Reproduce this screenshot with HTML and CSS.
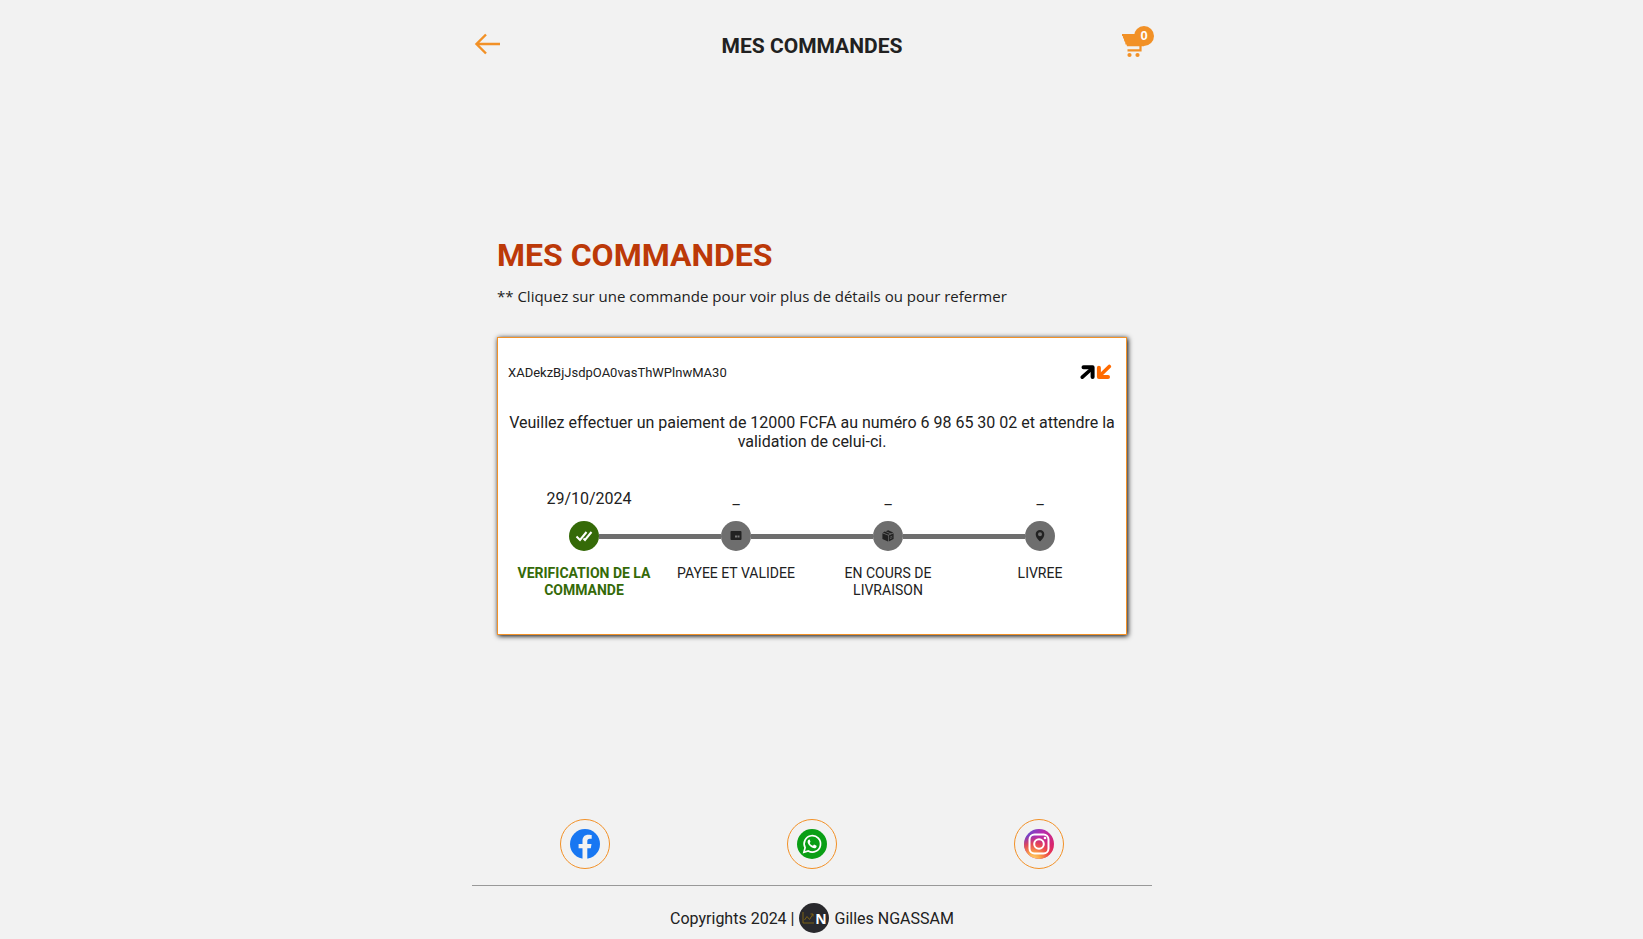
FILE: index.html
```html
<!DOCTYPE html>
<html lang="fr">
<head>
<meta charset="utf-8">
<meta name="viewport" content="width=device-width, initial-scale=1">
<title>Mes commandes</title>
<link rel="stylesheet" href="styles.css">
</head>
<body>
<div class="page">
  <header class="topbar">
    <button class="icon-button" type="button" aria-label="Retour">
      <svg class="back-icon" viewBox="0 0 30 30" fill="none" stroke="currentColor" stroke-width="2.4"><path d="M28 15H4.500M14 5.500 4.500 15l9.500 9.500"/></svg>
    </button>
    <div class="topbar-title">MES COMMANDES</div>
    <button class="icon-button cart-button" type="button" aria-label="Panier">
      <svg class="cart-icon" viewBox="0 0 30 30" fill="currentColor"><path d="M0 5H22V17.300H5L4.500 15.500H3.500L3 12.500H2.300L1.800 9.500H1.200L.8 7H0Z"/><path d="M5.500 21.300H18.500V17" fill="none" stroke="currentColor" stroke-width="2.200"/><circle cx="7.500" cy="26" r="2.100"/><circle cx="15.500" cy="26" r="2.100"/></svg>
      <span class="badge">0</span>
    </button>
  </header>

  <main class="orders">
    <h1 class="orders-title">MES COMMANDES</h1>
    <p class="orders-hint">** Cliquez sur une commande pour voir plus de détails ou pour refermer</p>

    <article class="card">
      <div class="card-head">
        <span class="order-id">XADekzBjJsdpOA0vasThWPlnwMA30</span>
        <svg class="money-icon" viewBox="0 0 32 16" fill="none" stroke-width="3.600"><g stroke="#000"><path d="M2.300 13.200 12 4.500" stroke-linecap="round"/><path d="M3.500 3.200H12.600V13" stroke-width="4" stroke-linejoin="round" stroke-linecap="round"/></g><g stroke="#ff6a00"><path d="M29.300 2.500 20 11.500" stroke-linecap="round"/><path d="M18.900 3.700V13H28" stroke-width="4" stroke-linejoin="round" stroke-linecap="round"/></g></svg>
      </div>
      <p class="message">Veuillez effectuer un paiement de 12000 FCFA au numéro 6 98 65 30 02 et attendre la validation de celui-ci.</p>
      <ol class="steps">
        <li class="step step-done">
          <span class="step-date">29/10/2024</span>
          <span class="step-track"><span class="step-dot"><svg class="check-icon" viewBox="0 0 18 12" fill="none" stroke="#fff" stroke-width="2"><path d="M1.500 6.500 5 10 11.500 2M8.500 8.500 10 10 16.500 2"/></svg></span></span>
          <span class="step-label">VERIFICATION DE LA COMMANDE</span>
        </li>
        <li class="step">
          <span class="step-date">_</span>
          <span class="step-track"><span class="step-dot"><svg class="step-icon" viewBox="0 0 12 12"><rect x=".5" y="1" width="11" height="9" rx="1" fill="#222"/><path d="M5 6.500h2M7.500 6.500h2" stroke="#777" stroke-width="1.800"/></svg></span></span>
          <span class="step-label">PAYEE ET VALIDEE</span>
        </li>
        <li class="step">
          <span class="step-date">_</span>
          <span class="step-track"><span class="step-dot"><svg class="step-icon" viewBox="0 0 12 12" fill="#222"><path d="M.4 3.300 6 5.500v6L.4 9ZM6.700 5.500 11.600 3.300V9L6.700 11.500ZM.8 2.500 2.800 1.600 8.200 3.900 6.300 4.800ZM3.700 1.200 6.200.2l5 2.200-2.100 1Z"/><path d="m7.800 8.800 2.500-1.200M7.800 7.300l2.500-1.200" stroke="#777" stroke-width=".6"/></svg></span></span>
          <span class="step-label">EN COURS DE LIVRAISON</span>
        </li>
        <li class="step">
          <span class="step-date">_</span>
          <span class="step-track"><span class="step-dot"><svg class="step-icon" viewBox="0 0 12 12" fill="#222"><path fill-rule="evenodd" d="M6 0C3.500 0 1.700 1.800 1.700 4.200 1.700 6.500 3 8.500 6 11.500 9 8.500 10.300 6.500 10.300 4.200 10.300 1.800 8.500 0 6 0ZM6 2.300a2 2 0 1 1 0 4 2 2 0 0 1 0-4Z"/></svg></span></span>
          <span class="step-label">LIVREE</span>
        </li>
      </ol>
    </article>
  </main>

  <footer class="footer">
    <nav class="socials" aria-label="Réseaux sociaux">
      <a class="social" href="#facebook" aria-label="Facebook"><svg class="social-icon" viewBox="0 0 30 30"><circle cx="15" cy="15" r="15" fill="#1877f2"/><path fill="#f2f2f2" d="M12.500 30V19.300H8.600V15h3.900v-3.300c0-3.900 2.300-6 5.800-6 1.700 0 3.400.3 3.400.3v3.800h-1.900c-1.900 0-2.500 1.200-2.500 2.300V15h4.200l-.7 4.300h-3.500V30Z"/></svg></a>
      <a class="social" href="#whatsapp" aria-label="WhatsApp"><svg class="social-icon" viewBox="0 0 30 30"><circle cx="15" cy="15" r="15" fill="#0a9f15"/><path d="M6.900 23.200 8.100 18.700A8.200 8.200 0 1 1 11.300 22Z" fill="none" stroke="#fff" stroke-width="1.700"/><path fill="#fff" d="M12.200 10.600c-.5 0-1.600.9-1.600 2.200 0 1.600 1.300 3.100 2.100 4 1.300 1.300 3.200 2.500 4.700 2.500 1.300 0 2.200-1 2.200-2.100 0-.4-.2-.5-.5-.7l-1.600-.8c-.4-.2-.6 0-.8.200l-.8.900c-1.500-.5-2.600-1.500-3.200-2.800l.7-1c.1-.2.100-.4 0-.6l-.6-1.400c-.1-.3-.3-.4-.6-.4Z"/></svg></a>
      <a class="social" href="#instagram" aria-label="Instagram"><svg class="social-icon" viewBox="0 0 30 30"><defs><linearGradient id="ig-base" x1="0" y1="0" x2="1" y2=".7"><stop offset="0" stop-color="#4c55d6"/><stop offset=".45" stop-color="#b52cb0"/><stop offset="1" stop-color="#e0245e"/></linearGradient><radialGradient id="ig-glow" cx=".3" cy="1.050" r=".85"><stop offset="0" stop-color="#ffdc7a"/><stop offset=".3" stop-color="#fba748"/><stop offset=".65" stop-color="#f2513f" stop-opacity=".8"/><stop offset="1" stop-color="#e0245e" stop-opacity="0"/></radialGradient></defs><circle cx="15" cy="15" r="15" fill="url(#ig-base)"/><circle cx="15" cy="15" r="15" fill="url(#ig-glow)"/><g fill="none" stroke="#fff" stroke-width="2"><rect x="5.500" y="5.500" width="19" height="19" rx="5"/><circle cx="15" cy="15" r="4.800"/></g><circle cx="21" cy="9" r="1.300" fill="#fff"/></svg></a>
    </nav>
    <div class="copyright">
      <span>Copyrights 2024 |</span>
      <span class="avatar"><svg class="chart-icon" viewBox="0 0 12 12" fill="none" stroke="#7a6015" stroke-width="1"><path d="M1 0v11h11M2.500 8 5 4.500l2.500 3L11 2M8.500 2H11v2.500"/></svg>N</span>
      <span>Gilles NGASSAM</span>
    </div>
  </footer>
</div>
</body>
</html>
```
FILE: styles.css
```css
* {
  box-sizing: border-box;
}

body {
  margin: 0;
  padding-right: 19px;
  background: #f2f2f2;
  color: #212121;
  font-family: Roboto, "Liberation Sans", sans-serif;
  font-size: 16px;
}

.page {
  display: flex;
  flex-direction: column;
  max-width: 680px;
  min-height: 100vh;
  margin: 0 auto;
}

.topbar {
  display: flex;
  align-items: center;
  justify-content: space-between;
  height: 88px;
}

.topbar-title {
  padding-top: 4px;
  font-size: 21px;
  font-weight: 700;
}

.icon-button {
  position: relative;
  width: 32px;
  height: 32px;
  padding: 0;
  border: 0;
  background: none;
  color: #f29127;
  cursor: pointer;
}

.icon-button svg {
  display: block;
  width: 30px;
  height: 30px;
}

.icon-button .cart-icon {
  margin-left: 2px;
}

.badge {
  position: absolute;
  top: -2px;
  right: -2px;
  width: 20px;
  height: 20px;
  border-radius: 50%;
  background: #f29127;
  color: #fff;
  font-size: 13px;
  font-weight: 700;
  line-height: 20px;
  text-align: center;
}

.orders {
  display: flex;
  flex: 1;
  flex-direction: column;
  justify-content: center;
  padding: 0 25px 36px;
}

.orders-title {
  margin: 0;
  color: #bc3908;
  font-size: 32px;
  font-weight: 700;
  line-height: 38px;
}

.orders-hint {
  margin: 12px 0 31px;
  font-family: "Open Sans", Lato, sans-serif;
  font-size: 15px;
  line-height: 20px;
}

.card {
  padding: 26px 10px 35px;
  border: 1px solid #f29127;
  background: #fff;
  box-shadow: 1px 1px 5px #000;
}

.card-head {
  display: flex;
  align-items: center;
  justify-content: space-between;
  height: 16px;
  padding-right: 4px;
}

.order-id {
  font-size: 13px;
}

.money-icon {
  width: 32px;
  height: 16px;
}

.message {
  margin: 33px 0 38px;
  line-height: 19px;
  text-align: center;
}

.steps {
  display: grid;
  grid-template-columns: repeat(4, 1fr);
  margin: 0;
  padding: 0;
  list-style: none;
}

.step {
  display: flex;
  flex-direction: column;
  align-items: center;
  text-align: center;
}

.step-date {
  line-height: 19px;
}

.step-done .step-date {
  padding-left: 10px;
}

.step-track {
  display: grid;
  grid-template-columns: 1fr 30px 1fr;
  align-items: center;
  align-self: stretch;
  margin: 13px 0 14px;
}

.step-track::before,
.step-track::after {
  height: 5px;
  background: #6e6e6e;
  content: "";
}

.step:first-child .step-track::before,
.step:last-child .step-track::after {
  background: none;
}

.step-dot {
  display: grid;
  place-items: center;
  width: 30px;
  height: 30px;
  border-radius: 50%;
  background: #6e6e6e;
}

.step-done .step-dot {
  background: #356a08;
}

.step-icon {
  width: 12px;
  height: 12px;
}

.check-icon {
  width: 18px;
  height: 12px;
}

.step-label {
  padding: 0 8px;
  font-size: 14px;
  line-height: 17px;
}

.step:nth-child(3) .step-label {
  padding: 0 24px;
}

.step-done .step-label {
  color: #356a08;
  font-weight: 700;
}

.socials {
  display: grid;
  grid-template-columns: repeat(3, 1fr);
  justify-items: center;
  padding-bottom: 16px;
  border-bottom: 1px solid #999;
}

.social {
  display: grid;
  place-items: center;
  width: 50px;
  height: 50px;
  border: 1px solid #f29127;
  border-radius: 50%;
}

.social-icon {
  width: 30px;
  height: 30px;
}

.copyright {
  display: flex;
  align-items: center;
  justify-content: center;
  gap: 5px;
  padding: 17px 0 6px;
}

.avatar {
  display: flex;
  align-items: center;
  justify-content: center;
  gap: 1px;
  width: 30px;
  height: 30px;
  border-radius: 50%;
  background: #29292d;
  color: #fff;
  font-family: "Open Sans", sans-serif;
  font-size: 14px;
  font-weight: 700;
}

.chart-icon {
  width: 12px;
  height: 12px;
}
```
